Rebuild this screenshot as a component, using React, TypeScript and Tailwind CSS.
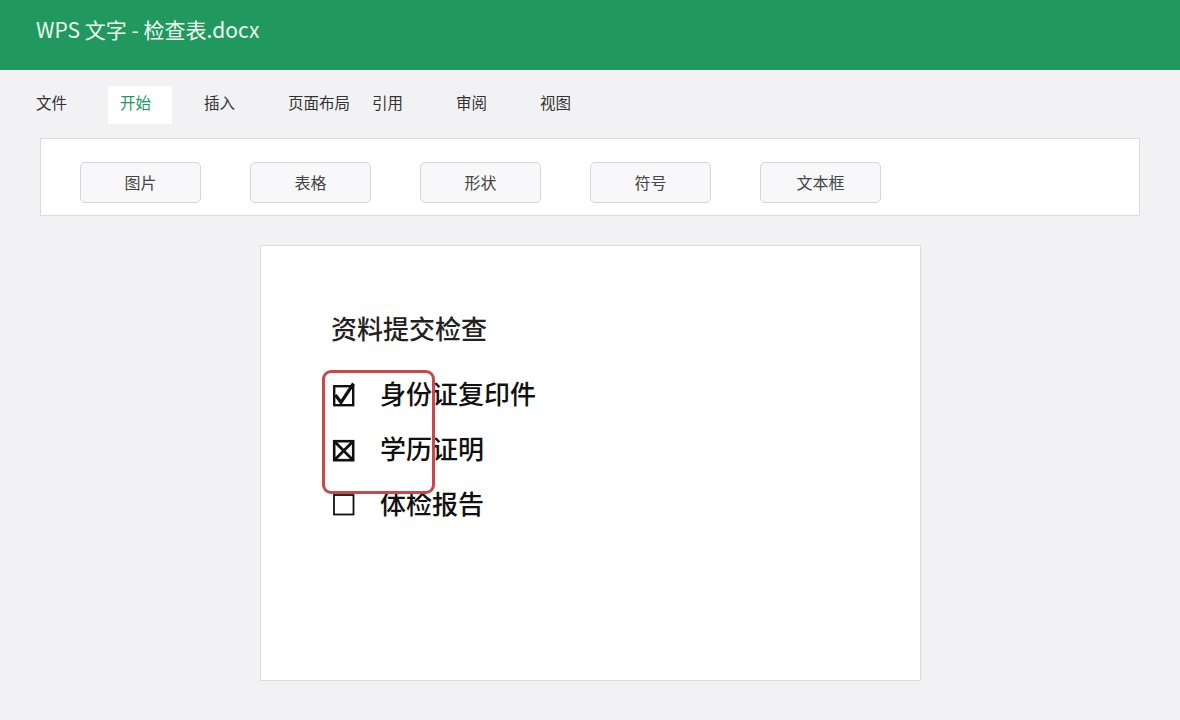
import React from "react";

const font = { fontFamily: '"Noto Sans CJK SC", "Noto Sans", sans-serif' };

function CheckedBox() {
  return (
    <svg width="24" height="26" viewBox="0 0 24 26" className="block">
      <rect x="2.2" y="5.2" width="19" height="19" fill="none" stroke="#111" strokeWidth="2.4" />
      <path d="M3.5 14 L9 21.5 L21.5 2.5" fill="none" stroke="#111" strokeWidth="3.2" strokeLinejoin="miter" />
    </svg>
  );
}

function CrossBox() {
  return (
    <svg width="24" height="26" viewBox="0 0 24 26" className="block">
      <rect x="2.2" y="4.2" width="19" height="19" fill="none" stroke="#111" strokeWidth="2.6" />
      <path d="M2.5 4.5 L20.9 22.9 M20.9 4.5 L2.5 22.9" fill="none" stroke="#111" strokeWidth="2.8" />
    </svg>
  );
}

function EmptyBox() {
  return (
    <svg width="24" height="26" viewBox="0 0 24 26" className="block">
      <rect x="2" y="4" width="19.5" height="19.5" fill="none" stroke="#111" strokeWidth="1.8" />
    </svg>
  );
}

export default function App() {
  const tabs = ["文件", "开始", "插入", "页面布局", "引用", "审阅", "视图"];
  const tools = ["图片", "表格", "形状", "符号", "文本框"];
  return (
    <div className="w-[1180px] h-[720px] bg-[#f2f2f4] overflow-hidden" style={font}>
      <div className="h-[70px] bg-[#21995e] flex items-center pl-[36px] pb-[10px]">
        <span className="text-[21px] text-[#eef8f1]">WPS 文字 - 检查表.docx</span>
      </div>
      <div className="flex gap-[20px] pl-[24px] pt-[16px] h-[68px]">
        {tabs.map((t) => (
          <div
            key={t}
            className={`w-[64px] h-[38px] shrink-0 pl-[12px] pb-[4px] flex items-center whitespace-nowrap text-[15.5px] ${
              t === "开始" ? "bg-white text-[#23995f]" : "text-[#333]"
            }`}
          >
            {t}
          </div>
        ))}
      </div>
      <div className="mx-[40px] h-[78px] bg-white border border-[#dcdcdf] flex items-start gap-[49px] pl-[39px] pt-[23px]">
        {tools.map((t) => (
          <div
            key={t}
            className="w-[121px] h-[41px] rounded-[5px] bg-[#f8f8fa] border border-[#d6d6da] flex items-center justify-center text-[16px] text-[#444] pb-[1px]"
          >
            {t}
          </div>
        ))}
      </div>
      <div className="ml-[260px] mt-[29px] w-[661px] h-[436px] bg-white border border-[#dcdcdf] pl-[70px] pt-[66px]">
        <div className="text-[26px] font-medium text-[#222] leading-[32px]">资料提交检查</div>
        <div className="relative mt-[32px] flex flex-col gap-[23px]">
          <div className="absolute left-[-9px] top-[-6px] w-[113px] h-[124px] border-[3px] border-[#c9484b] rounded-[9px]" />
          <div className="flex items-center gap-[24px] h-[32px]">
            <div className="ml-[1px] translate-y-[2px]"><CheckedBox /></div>
            <span className="text-[26px] font-medium text-[#111]">身份证复印件</span>
          </div>
          <div className="flex items-center gap-[24px] h-[32px]">
            <div className="ml-[1px] translate-y-[3px]"><CrossBox /></div>
            <span className="text-[26px] font-medium text-[#111]">学历证明</span>
          </div>
          <div className="flex items-center gap-[24px] h-[32px]">
            <div className="ml-[1px] translate-y-[2px]"><EmptyBox /></div>
            <span className="text-[26px] font-medium text-[#111]">体检报告</span>
          </div>
        </div>
      </div>
    </div>
  );
}
